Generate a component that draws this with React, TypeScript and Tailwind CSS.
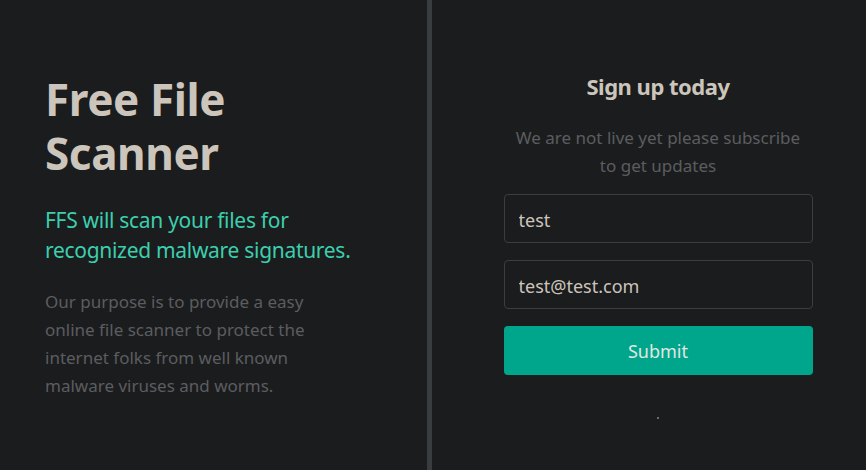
import React from "react";

export default function App() {
  const [name, setName] = React.useState("test");
  const [email, setEmail] = React.useState("test@test.com");

  return (
    <div className="flex h-[470px] w-full bg-[#1b1c1e] font-['Noto_Sans','Open_Sans',sans-serif]">
      <div className="w-[427px] shrink-0 pl-[45px] pr-6 pt-[72px]">
        <h1 className="text-[44px] font-bold leading-[54px] tracking-[-0.4px] text-[#cbc5bb]">
          <span className="block">Free File</span>
          <span className="block">Scanner</span>
        </h1>
        <p className="mt-[25px] text-[21px] leading-[30px] tracking-[-0.3px] text-[#3ccfad]">
          FFS will scan your files for
          <br />
          recognized malware signatures.
        </p>
        <p className="mt-[23px] w-[290px] text-[17px] leading-[28px] text-[#5b5d60]">
          Our purpose is to provide a easy online file scanner to protect the
          internet folks from well known malware viruses and worms.
        </p>
      </div>
      <div className="w-[5px] shrink-0 bg-[#393c3f]" />
      <div className="flex flex-1 flex-col items-center pl-[18px] pt-[71px]">
        <h2 className="text-[22px] font-bold leading-[30px] tracking-[-0.5px] text-[#cbc5bb]">
          Sign up today
        </h2>
        <p className="mt-[23px] w-[300px] text-center text-[17px] leading-[28px] text-[#5b5d60]">
          We are not live yet please subscribe to get updates
        </p>
        <form
          className="mt-[14px] flex w-[309px] flex-col gap-[17px]"
          onSubmit={(e) => e.preventDefault()}
        >
          <input
            type="text"
            value={name}
            onChange={(e) => setName(e.target.value)}
            className="h-[49px] rounded border border-[#3b3d40] bg-[#1b1c1e] px-[14px] pt-[2px] text-[18px] text-[#cbc5bb] outline-none"
          />
          <input
            type="email"
            value={email}
            onChange={(e) => setEmail(e.target.value)}
            className="h-[49px] rounded border border-[#3b3d40] bg-[#1b1c1e] px-[14px] pt-[2px] text-[18px] text-[#cbc5bb] outline-none"
          />
          <button
            type="submit"
            className="h-[49px] rounded bg-[#00a68c] pt-[2px] text-[18px] text-[#e2e6e1]"
          >
            Submit
          </button>
        </form>
        <div className="mt-[42px] h-[2px] w-[2px] bg-[#6a6c6e]" />
      </div>
    </div>
  );
}
